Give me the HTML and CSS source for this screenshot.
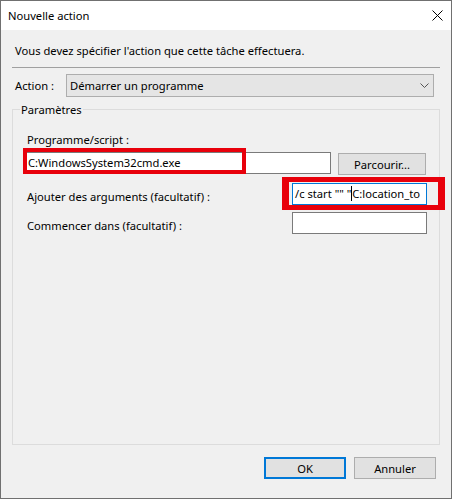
FILE: index.html
```html
<!DOCTYPE html>
<html lang="fr">
<head>
<meta charset="utf-8">
<title>Nouvelle action</title>
<link rel="stylesheet" href="styles.css">
</head>
<body>
<div class="window">
  <div class="titlebar">
    <span class="title">Nouvelle action</span>
    <svg class="close" width="11" height="11" viewBox="0 0 11 11"><path d="M0.5 0.5 L10.5 10.5 M10.5 0.5 L0.5 10.5" stroke="#000" stroke-width="1" fill="none"/></svg>
  </div>
  <div class="content">
    <p class="intro">Vous devez spécifier l'action que cette tâche effectuera.</p>
    <div class="sep"></div>
    <div class="action-row">
      <span class="action-label">Action :</span>
      <div class="combo">
        <span>Démarrer un programme</span>
        <svg class="chevron" width="9" height="5" viewBox="0 0 9 5"><path d="M0.5 0.5 L4.5 4.5 L8.5 0.5" stroke="#555" stroke-width="1" fill="none"/></svg>
      </div>
    </div>
    <fieldset class="group">
      <legend>Paramètres</legend>
      <div class="prog-label">Programme/script :</div>
      <div class="prog-row">
        <div class="input input-prog">C:WindowsSystem32cmd.exe</div>
        <div class="btn btn-browse">Parcourir...</div>
      </div>
      <div class="field-row row-args">
        <span class="field-label">Ajouter des arguments (facultatif) :</span>
        <div class="input input-small input-focus">/c start "" "<span class="caret"></span>C:location_to</div>
      </div>
      <div class="field-row row-start">
        <span class="field-label">Commencer dans (facultatif) :</span>
        <div class="input input-small"></div>
      </div>
    </fieldset>
    <div class="footer">
      <div class="btn btn-default">OK</div>
      <div class="btn">Annuler</div>
    </div>
  </div>
  <div class="mark mark-prog"></div>
  <div class="mark mark-args"></div>
</div>
</body>
</html>
```
FILE: styles.css
```css
* { box-sizing: border-box; }
html, body { margin: 0; padding: 0; }
body {
  font-family: "Noto Sans", "Segoe UI", sans-serif;
  font-size: 11.2px;
  color: #000;
  background: #f0f0f0;
}
.window {
  position: relative;
  width: 452px;
  height: 499px;
  border: 1px solid #707070;
  background: #f0f0f0;
  display: flex;
  flex-direction: column;
}
.titlebar {
  height: 29px;
  background: #fff;
  display: flex;
  align-items: center;
  justify-content: space-between;
  padding: 0 8px 0 7px;
}
.title { line-height: 15px; }
.close { display: block; }
.content {
  padding: 0 11px;
  flex: 1;
  display: flex;
  flex-direction: column;
}
.intro {
  margin: 13px 0 0;
  padding-left: 3px;
  line-height: 15px;
}
.sep {
  height: 1px;
  background: #a0a0a0;
  margin-top: 9px;
}
.action-row {
  display: flex;
  align-items: center;
  margin-top: 6px;
  height: 23px;
}
.action-label {
  width: 54px;
  padding-left: 3px;
  line-height: 15px;
}
.combo {
  width: 368px;
  height: 23px;
  border: 1px solid #adadad;
  background: #e5e5e5;
  display: flex;
  align-items: center;
  justify-content: space-between;
  padding: 0 4px 0 3px;
}
.chevron { display: block; }
.group {
  margin: 5px 0 0;
  padding: 0 12px 0 14px;
  border: 1px solid #dcdcdc;
  height: 343px;
  min-width: 0;
}
.group legend {
  padding: 0 1px;
  margin-left: -7px;
  line-height: 15px;
}
.prog-label {
  line-height: 15px;
  margin-top: 15px;
}
.prog-row {
  display: flex;
  align-items: flex-start;
  margin-top: 5px;
}
.input {
  height: 22px;
  border: 1px solid #7a7a7a;
  background: #fff;
  padding: 0 2px;
  line-height: 20px;
  white-space: nowrap;
  overflow: hidden;
}
.input-prog {
  width: 306px;
  margin-left: -2px;
}
.input-small { width: 135px; }
.input-focus { border-color: #0078d7; }
.caret {
  display: inline-block;
  width: 1px;
  height: 15px;
  background: #000;
  vertical-align: -3px;
}
.btn {
  width: 82px;
  height: 22px;
  background: #e1e1e1;
  border: 1px solid #adadad;
  display: flex;
  align-items: center;
  justify-content: center;
  line-height: 15px;
}
.btn-browse {
  width: 88px;
  margin-left: 7px;
  margin-top: 1px;
}
.btn-default { border: 2px solid #0078d7; }
.field-row {
  display: flex;
  justify-content: space-between;
  align-items: flex-start;
}
.row-args { margin-top: 8px; }
.row-start { margin-top: 7px; }
.field-label {
  line-height: 15px;
  padding-top: 6px;
}
.footer {
  display: flex;
  justify-content: flex-end;
  gap: 8px;
  margin-top: 12px;
  padding-right: 4px;
}
.mark {
  position: absolute;
  border: 4px solid #e8000b;
}
.mark-prog {
  left: 22px;
  top: 147px;
  width: 223px;
  height: 26px;
}
.mark-args {
  left: 281px;
  top: 176px;
  width: 163px;
  height: 33px;
  border-width: 5px 7px 5px 7px;
}
```
